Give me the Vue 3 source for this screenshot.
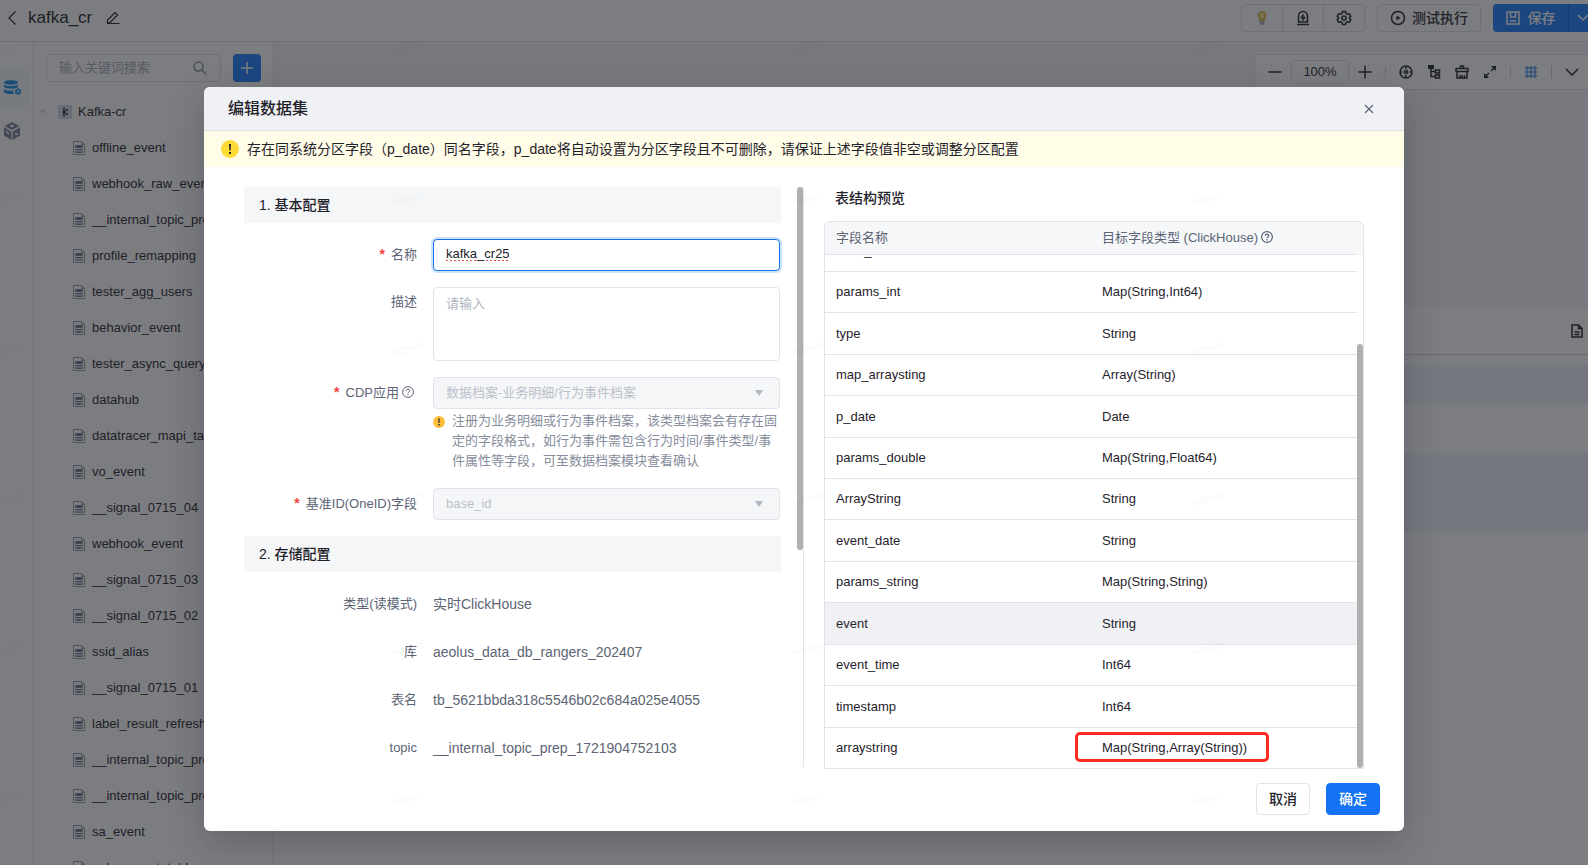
<script setup>
import { ref, onMounted } from 'vue'

const datasets = [
  'offline_event', 'webhook_raw_event', '__internal_topic_prep', 'profile_remapping', 'tester_agg_users',
  'behavior_event', 'tester_async_query', 'datahub', 'datatracer_mapi_table', 'vo_event', '__signal_0715_04',
  'webhook_event', '__signal_0715_03', '__signal_0715_02', 'ssid_alias', '__signal_0715_01',
  'label_result_refresh', '__internal_topic_prep', '__internal_topic_prep', 'sa_event', '__bu_event_table',
]

const fields = [
  ['base_id', 'Int64'],
  ['params_int', 'Map(String,Int64)'],
  ['type', 'String'],
  ['map_arraysting', 'Array(String)'],
  ['p_date', 'Date'],
  ['params_double', 'Map(String,Float64)'],
  ['ArrayString', 'String'],
  ['event_date', 'String'],
  ['params_string', 'Map(String,String)'],
  ['event', 'String'],
  ['event_time', 'Int64'],
  ['timestamp', 'Int64'],
  ['arraystring', 'Map(String,Array(String))'],
]

const storage = [
  ['类型(读模式)', '实时ClickHouse'],
  ['库', 'aeolus_data_db_rangers_202407'],
  ['表名', 'tb_5621bbda318c5546b02c684a025e4055'],
  ['topic', '__internal_topic_prep_1721904752103'],
]

const name = ref('kafka_cr25')
const desc = ref('')
const scroller = ref(null)

onMounted(() => {
  scroller.value.scrollTop = scroller.value.scrollHeight
})
</script>

<template>
  <div class="app">
    <header class="topbar">
      <button class="plain" aria-label="返回">
        <svg width="10" height="16" viewBox="0 0 10 16"><path d="M8.5 1.5 2 8l6.500 6.500" /></svg>
      </button>
      <h1>kafka_cr</h1>
      <button class="plain" aria-label="重命名">
        <svg width="14" height="14" viewBox="0 0 14 14"><path d="M1.500 12.300V9L9 1.500l2.500 2.500-7.500 7.500zM1.500 12.500h12" /></svg>
      </button>
      <span class="grow"></span>
      <div class="tool-group">
        <button aria-label="提示">
          <svg class="bulb" width="12" height="16" viewBox="0 0 12 16">
            <path class="glow" d="M6 1a4.500 4.500 0 0 0-3 7.800V11h6V8.800A4.500 4.500 0 0 0 6 1z" />
            <path class="shine" d="M4 3h4v5H4z" />
            <path class="cap" d="M3.500 11h5v2.500l-1 1.500h-3l-1-1.500z" />
          </svg>
        </button>
        <button aria-label="告警">
          <svg width="14" height="16" viewBox="0 0 14 16"><path d="M1 14.500h12M2.500 12V6a4.500 4.500 0 0 1 9 0v6zM7.500 4.500l-2 3h3l-2 3" /></svg>
        </button>
        <button aria-label="设置">
          <svg width="16" height="16" viewBox="0 0 16 16"><path d="M6.500 1.500h3l.5 2 1.500.8 2-.5 1.300 2.500L13.300 8l1.500 1.700-1.300 2.500-2-.5-1.500.8-.5 2h-3l-.5-2-1.500-.8-2 .5-1.300-2.500L2.700 8 1.200 6.300l1.300-2.500 2 .5L6 3.500z" /><circle cx="8" cy="8" r="2" /></svg>
        </button>
      </div>
      <button class="run">
        <svg width="16" height="16" viewBox="0 0 16 16"><circle cx="8" cy="8" r="6.500" /><path class="solid" d="m6.500 5.500 4 2.500-4 2.500z" /></svg>
        测试执行
      </button>
      <div class="save">
        <button class="save-main">
          <svg width="14" height="14" viewBox="0 0 14 14"><path d="M1 1h12v12H1zM4.500 1v5h5V1M4 10h6" /></svg>
          保存
        </button>
        <button class="save-more" aria-label="更多">
          <svg width="12" height="8" viewBox="0 0 12 8"><path d="m1 1 5 5 5-5" /></svg>
        </button>
      </div>
    </header>

    <div class="workspace">
      <nav class="rail">
        <a href="#data" class="rail-item active" aria-label="数据">
          <svg width="18" height="18" viewBox="0 0 18 18">
            <path class="solid" d="M0 3.500C0 .5 14 .5 14 3.500S0 6.500 0 3.500zM0 5.500c2 2 12 2 14 0V8c-2 2.300-12 2.300-14 0zM0 10c2 1.800 7 2 10 1.300l-1 1.500 1 2C6 15.300 1 15 0 13z" />
            <circle cx="14" cy="12.500" r="1.800" /><path d="M14 9v1.500M14 14.500V16M11 10.800l1.500.8M15.500 13.400l1.500.9M11 14.300l1.500-.9M15.500 11.600l1.500-.8" />
          </svg>
        </a>
        <a href="#model" class="rail-item" aria-label="模型">
          <svg width="16" height="18" viewBox="0 0 16 18">
            <path class="solid" d="M8 0 15.300 4 8 8 .7 4zM0 5.200l7.400 4.200V18L0 13.500zM16 5.200 8.600 9.400V18l7.400-4.500z" />
            <path class="mark" d="m6.500 3 3 2m0-2-3 2M2 9l3 3M11 12h3" />
          </svg>
        </a>
      </nav>

      <aside class="sidebar">
        <div class="search-row">
          <label class="search">
            <input type="text" placeholder="输入关键词搜索" aria-label="输入关键词搜索" />
            <svg width="14" height="14" viewBox="0 0 14 14"><circle cx="5.500" cy="5.500" r="4.500" /><path d="m9 9 4.500 4.500" /></svg>
          </label>
          <button class="add" aria-label="新建"><svg width="14" height="14" viewBox="0 0 14 14"><path d="M7 1v12M1 7h12" /></svg></button>
        </div>
        <div class="source">
          <svg class="caret" width="6" height="4" viewBox="0 0 6 4"><path d="M0 0h6L3 4z" /></svg>
          <svg width="14" height="14" viewBox="0 0 14 14">
            <rect class="tile" width="14" height="14" rx="1" />
            <path d="M6 3v8M6 7l3-2M6 7l3 2" /><circle class="dot" cx="6" cy="7" r="1.500" /><circle class="dot" cx="9" cy="5" r="1" /><circle class="dot" cx="9" cy="9" r="1" /><circle class="dot" cx="6" cy="3.500" r="1" /><circle class="dot" cx="6" cy="10.500" r="1" />
          </svg>
          <span>Kafka-cr</span>
        </div>
        <ul>
          <li v-for="(d, i) in datasets" :key="i">
            <svg width="12" height="14" viewBox="0 0 12 14">
              <path class="sheet" d="M.5.5h8l3 3v10H.5zM8.500.5v3h3" />
              <path class="disk" d="M2 5c0-1.300 8-1.300 8 0v1c0 1.300-8 1.300-8 0zM2 7.600c1.500.8 6.500.8 8 0v1.200c-1.500.9-6.500.9-8 0zM2 10c1.500.8 6.500.8 8 0v1.200c-1.500.9-6.500.9-8 0z" />
            </svg>
            <span>{{ d }}</span>
          </li>
        </ul>
      </aside>

      <main class="canvas">
        <div class="canvas-tools">
          <button class="plain" aria-label="缩小"><svg width="14" height="14" viewBox="0 0 14 14"><path d="M.5 7h13" /></svg></button>
          <span class="zoom">100%</span>
          <button class="plain" aria-label="放大"><svg width="14" height="14" viewBox="0 0 14 14"><path d="M.5 7h13M7 .5v13" /></svg></button>
          <i></i>
          <button class="plain" aria-label="定位"><svg width="14" height="14" viewBox="0 0 14 14"><circle cx="7" cy="7" r="6" /><circle cx="7" cy="7" r="1.500" /><path d="M7 2v2M7 10v2M2 7h1.500M10.500 7H12" /></svg></button>
          <button class="plain" aria-label="布局"><svg width="14" height="14" viewBox="0 0 14 14"><path class="solid" d="M1 0h6v4H1z" /><path d="M4 3v8.500h5M4 6.500h5M8.500 5h4v3h-4zM8.500 10h4v3h-4z" /></svg></button>
          <button class="plain" aria-label="清理"><svg width="14" height="14" viewBox="0 0 14 14"><path d="M5.500 3.500V1h3v2.500M1 3.500h12v3H1zM2 6.500V13h10V6.500M5 13v-3M7 13v-3M9.500 13v-3" /></svg></button>
          <button class="plain" aria-label="全屏"><svg width="14" height="14" viewBox="0 0 14 14"><path d="M8 6 11 3M6 8l-3 3" /><path class="solid" d="M8 1h5v5zM1 8v5h5z" /></svg></button>
          <i></i>
          <button class="plain grid-on" aria-label="网格"><svg width="14" height="14" viewBox="0 0 14 14"><path d="M3 1v12M7 1v12M11 1v12M1 3h12M1 7h12M1 11h12" /></svg></button>
          <i></i>
          <button class="plain" aria-label="展开"><svg width="14" height="8" viewBox="0 0 14 8"><path d="m1 1 6 6 6-6" /></svg></button>
        </div>
        <section class="detail">
          <div class="detail-head">
            <svg width="12" height="14" viewBox="0 0 12 14"><path d="M1 1h6.500L11 4.500V13H1zM7.500 1v3.500H11M3.500 8h5M3.500 10.500h5" /></svg>
          </div>
          <div class="band short"></div>
          <div class="band tall"></div>
        </section>
      </main>
    </div>

    <div class="mask">
      <section class="modal" role="dialog" aria-labelledby="modal-title">
        <header class="modal-head">
          <h2 id="modal-title">编辑数据集</h2>
          <button class="plain" aria-label="关闭"><svg width="10" height="10" viewBox="0 0 10 10"><path d="m1 1 8 8M9 1 1 9" /></svg></button>
        </header>
        <p class="alert">
          <svg width="18" height="18" viewBox="0 0 18 18"><circle cx="9" cy="9" r="9" /><path d="M8 4h2l-.4 6.500H8.400zM8 12h2v2H8z" /></svg>
          存在同系统分区字段（p_date）同名字段，p_date将自动设置为分区字段且不可删除，请保证上述字段值非空或调整分区配置
        </p>
        <div class="modal-body">
          <form class="config">
            <h3>1. 基本配置</h3>
            <div class="row">
              <label for="ds-name"><b>*</b>名称</label>
              <input id="ds-name" v-model="name" class="field focused" type="text" />
            </div>
            <div class="row">
              <label for="ds-desc">描述</label>
              <textarea id="ds-desc" v-model="desc" class="field" placeholder="请输入"></textarea>
            </div>
            <div class="row">
              <label for="ds-app" class="with-help"><b>*</b>CDP应用<svg class="help" width="12" height="12" viewBox="0 0 12 12"><circle cx="6" cy="6" r="5.400" /><path d="M4.300 4.800c0-2.300 3.400-2.200 3.400-.1C7.700 5.900 6 6 6 7.300M6 8.300v1.200" /></svg></label>
              <div>
                <div class="select">
                  <select id="ds-app" class="field" disabled><option>数据档案-业务明细/行为事件档案</option></select>
                  <svg width="8" height="6" viewBox="0 0 8 6"><path d="M0 0h8L4 6z" /></svg>
                </div>
                <p class="tip">
                  <svg width="12" height="12" viewBox="0 0 12 12"><circle cx="6" cy="6" r="6" /><path d="M5.300 2.500h1.400L6.500 7h-1zM5.300 8h1.400v1.500H5.300z" /></svg>
                  <span>注册为业务明细或行为事件档案，该类型档案会有存在固定的字段格式，如行为事件需包含行为时间/事件类型/事件属性等字段，可至数据档案模块查看确认</span>
                </p>
              </div>
            </div>
            <div class="row">
              <label for="ds-key"><b>*</b>基准ID(OneID)字段</label>
              <div class="select">
                <select id="ds-key" class="field" disabled><option>base_id</option></select>
                <svg width="8" height="6" viewBox="0 0 8 6"><path d="M0 0h8L4 6z" /></svg>
              </div>
            </div>
            <h3>2. 存储配置</h3>
            <div v-for="s in storage" :key="s[0]" class="row">
              <span class="key">{{ s[0] }}</span>
              <span class="value">{{ s[1] }}</span>
            </div>
            <div class="thumb"></div>
          </form>

          <section class="preview">
            <h3>表结构预览</h3>
            <div class="table-box">
              <div ref="scroller" class="scroller">
                <table>
                  <thead>
                    <tr>
                      <th>字段名称</th>
                      <th>目标字段类型 (ClickHouse)<svg class="help" width="12" height="12" viewBox="0 0 12 12"><circle cx="6" cy="6" r="5.400" /><path d="M4.300 4.800c0-2.300 3.400-2.200 3.400-.1C7.700 5.900 6 6 6 7.300M6 8.300v1.200" /></svg></th>
                    </tr>
                  </thead>
                  <tbody>
                    <tr v-for="f in fields" :key="f[0]" :class="{ hover: f[0] === 'event' }">
                      <td>{{ f[0] }}</td>
                      <td><span :class="{ marked: f[0] === 'arraystring' }">{{ f[1] }}</span></td>
                    </tr>
                  </tbody>
                </table>
              </div>
              <div class="thumb"></div>
            </div>
          </section>
        </div>
        <footer class="modal-foot">
          <button type="button">取消</button>
          <button type="button" class="primary">确定</button>
        </footer>
      </section>
    </div>

    <div class="watermark" aria-hidden="true">
      <span v-for="n in 30" :key="n">admin</span>
    </div>
  </div>
</template>

<style>
body {
  overflow: hidden;
}
</style>

<style scoped>
* {
  box-sizing: border-box;
}

.app {
  position: relative;
  display: flex;
  flex-direction: column;
  min-width: 1608px;
  height: 100vh;
  overflow: hidden;
  background: #fff;
  color: #1f232b;
  font: 13px/20px "Liberation Sans", "Noto Sans CJK SC", sans-serif;
}

h1, h2, h3, p, ul {
  margin: 0;
  padding: 0;
  font-weight: 500;
}

button, input, textarea, select {
  margin: 0;
  padding: 0;
  color: inherit;
  font: inherit;
}

svg {
  flex: none;
  fill: none;
  stroke: currentColor;
  stroke-width: 1.5;
}

.solid {
  fill: currentColor;
  stroke: none;
}

.plain {
  display: flex;
  align-items: center;
  justify-content: center;
  border: 0;
  background: none;
}

.grow {
  flex: 1;
}

.topbar {
  display: flex;
  align-items: center;
  height: 42px;
  padding: 0 12px 6px 7px;
  border-bottom: 1px solid #dfe1e8;
}

.topbar h1 {
  margin: 0 14px 0 11px;
  font-size: 17px;
}

.topbar .plain svg {
  stroke-width: 1.2;
}

.tool-group, .save {
  display: flex;
}

.tool-group button, .run {
  display: flex;
  align-items: center;
  justify-content: center;
  height: 28px;
  border: 1px solid #dfe1e8;
  background: #fff;
}

.tool-group button {
  width: 42px;
}

.tool-group button + button {
  margin-left: -1px;
}

.tool-group button:first-child {
  border-radius: 4px 0 0 4px;
}

.tool-group button:last-child {
  border-radius: 0 4px 4px 0;
}

.bulb {
  stroke: none;
}

.glow {
  fill: #d9b84a;
}

.shine {
  fill: #fbe58a;
}

.cap {
  fill: #aab0bb;
}

.run {
  gap: 6px;
  width: 104px;
  margin: 0 12px;
  border-radius: 4px;
  font-size: 14px;
  font-weight: 500;
}

.save button {
  display: flex;
  align-items: center;
  justify-content: center;
  height: 28px;
  border: 0;
  background: #1a7cff;
  color: #fff;
  font-size: 14px;
  font-weight: 500;
}

.save-main {
  gap: 8px;
  width: 75px;
  border-radius: 4px 0 0 4px;
}

.save .save-more {
  width: 28px;
  border-left: 1px solid #0e5fcc;
  border-radius: 0 4px 4px 0;
}

.workspace {
  display: flex;
  flex: 1;
  min-height: 0;
}

.rail {
  display: flex;
  flex-direction: column;
  gap: 7px;
  width: 34px;
  padding-top: 28px;
  border-right: 1px solid #dfe1e8;
}

.rail-item {
  display: flex;
  align-items: center;
  width: 30px;
  height: 36px;
  padding-left: 4px;
  color: #7b8196;
}

.rail-item.active {
  border-radius: 0 4px 4px 0;
  background: #f3f7fc;
  color: #1a90e8;
}

.mark {
  stroke: #fff;
}

.sidebar {
  width: 240px;
  padding: 12px 12px 0;
  overflow: hidden;
  border-right: 1px solid #dfe1e8;
}

.search-row {
  display: flex;
  gap: 12px;
}

.search {
  display: flex;
  flex: 1;
  align-items: center;
  min-width: 0;
  height: 28px;
  padding: 0 13px 0 12px;
  border: 1px solid #dfe1e8;
  border-radius: 4px;
  color: #8b91a0;
}

.search input {
  flex: 1;
  min-width: 0;
  border: 0;
  outline: 0;
  background: none;
}

.search input::placeholder {
  color: #a8adba;
}

.add {
  display: flex;
  align-items: center;
  justify-content: center;
  width: 28px;
  height: 28px;
  border: 0;
  border-radius: 4px;
  background: #1a7cff;
  color: #fff;
}

.source, .sidebar li {
  display: flex;
  align-items: center;
  height: 36px;
  white-space: nowrap;
}

.source {
  margin-top: 12px;
}

.source svg {
  margin-right: 6px;
  stroke-width: 1;
}

.source .caret {
  margin-right: 12px;
  margin-left: -6px;
  fill: #d5d8df;
  stroke: none;
}

.tile {
  fill: #d4d6e4;
  stroke: none;
}

.dot {
  fill: currentColor;
  stroke: none;
}

.sidebar ul {
  list-style: none;
}

.sidebar li {
  gap: 7px;
  padding-left: 27px;
}

.sheet {
  stroke: #989da8;
  stroke-width: 1;
}

.disk {
  fill: #62768c;
  stroke: none;
}

.canvas {
  display: flex;
  flex: 1;
  flex-direction: column;
  min-width: 0;
  padding-top: 12px;
  background: #f5f6f9;
}

.canvas-tools {
  display: flex;
  align-items: center;
  align-self: flex-end;
  gap: 14px;
  height: 36px;
  margin-right: 15px;
  padding: 0 13px;
  border: 1px solid #dfe1e8;
  border-radius: 4px;
  background: #fff;
}

.canvas-tools .plain:first-child, .zoom {
  margin-right: -5px;
}

.zoom {
  width: 58px;
  height: 24px;
  border: 1px solid #dfe1e8;
  border-radius: 4px;
  line-height: 22px;
  text-align: center;
}

.canvas-tools i {
  width: 1px;
  height: 12px;
  margin: 0 -1px;
  background: #d0d3db;
}

.grid-on {
  color: #5c9bf0;
}

.detail {
  flex: 1;
  margin-top: 217px;
  background: #fff;
}

.detail-head {
  display: flex;
  align-items: center;
  justify-content: flex-end;
  height: 48px;
  padding: 0 25px 0 0;
  border-bottom: 1px solid #d0d3db;
}

.band {
  background: #eff4f9;
}

.short {
  height: 40px;
  margin-top: 10px;
}

.tall {
  height: 80px;
  margin-top: 48px;
}

.mask {
  position: absolute;
  inset: 0;
  display: flex;
  align-items: flex-start;
  justify-content: center;
  padding-top: 87px;
  background: rgba(30, 31, 36, 0.58);
}

.modal {
  width: 1200px;
  overflow: hidden;
  border-radius: 6px;
  background: #fff;
  box-shadow: 0 12px 36px rgba(20, 24, 40, 0.24);
}

.modal-head {
  display: flex;
  align-items: center;
  justify-content: space-between;
  height: 44px;
  padding: 0 30px 0 24px;
  border-bottom: 1px solid #e0e3ea;
  background: #f0f1f5;
}

.modal-head h2 {
  font-size: 16px;
}

.modal-head svg {
  color: #5c6475;
  stroke-width: 1.2;
}

.alert {
  display: flex;
  align-items: center;
  gap: 8px;
  height: 36px;
  padding: 0 0 1px 17px;
  background: #fffce8;
  font-size: 14px;
  font-weight: 400;
}

.alert svg {
  fill: #ffd936;
  stroke: none;
}

.alert path, .tip path {
  fill: #1d2129;
}

.modal-body {
  display: grid;
  grid-template-columns: 560px 1fr;
  gap: 20px;
  align-items: start;
  padding: 20px 40px 0;
}

.config {
  position: relative;
  display: flex;
  flex-direction: column;
  gap: 16px;
  height: 580px;
  padding-right: 22px;
  overflow: hidden;
  border-right: 1px solid #e0e3ea;
}

.config h3 {
  height: 36px;
  padding-left: 15px;
  background: #f5f6f8;
  font-size: 14px;
  line-height: 36px;
}

.row {
  display: grid;
  grid-template-columns: 173px 1fr;
  gap: 16px;
  padding-right: 1px;
  color: #5c6475;
}

.row label {
  justify-self: end;
  line-height: 30px;
}

.row .with-help {
  margin-right: 3px;
}

.row b {
  margin-right: 6px;
  color: #f53f3f;
  font-size: 14px;
}

.help {
  margin-left: 3px;
  vertical-align: -1px;
  stroke-width: 1;
}

.key {
  justify-self: end;
  line-height: 32px;
}

.value {
  font-size: 14px;
  line-height: 32px;
}

.field {
  display: block;
  width: 100%;
  height: 32px;
  padding: 0 12px;
  border: 1px solid #e0e3ea;
  border-radius: 4px;
  outline: 0;
  background: #fff;
  color: #1d2129;
  appearance: none;
}

.field::placeholder {
  color: #b0b5c2;
}

.focused {
  padding-bottom: 3px;
  border-color: #1473f2;
  box-shadow: 0 0 0 2px #cfe2fd;
  text-decoration: underline dotted #f5504f 2px;
  text-underline-offset: 2px;
}

textarea.field {
  height: 74px;
  padding: 6px 12px;
  resize: none;
}

.select {
  position: relative;
}

.select .field {
  background: #f5f6f8;
  color: #bbc0cb;
  opacity: 1;
}

.select svg {
  position: absolute;
  top: 13px;
  right: 17px;
  fill: #b2b8c5;
  stroke: none;
}

.tip {
  display: flex;
  gap: 7px;
  margin: 2px 0 1px;
  color: #868d9c;
  font-weight: 400;
}

.tip svg {
  margin-top: 5px;
  fill: #ffbf3a;
  stroke: none;
}

.thumb {
  position: absolute;
  right: 0;
  width: 6px;
  border-radius: 3px;
  background: #b0b0b0;
}

.config .thumb {
  top: 0;
  height: 363px;
}

.preview h3 {
  padding-left: 11px;
  font-size: 14px;
  line-height: 22px;
}

.table-box {
  position: relative;
  height: 548px;
  margin-top: 12px;
  padding-right: 6px;
  overflow: hidden;
  border: 1px solid #e0e3ea;
  border-radius: 6px 6px 0 0;
  background: linear-gradient(#f5f7f9 33px, #fff 33px);
}

.table-box .thumb {
  bottom: 0;
  height: 424px;
}

.scroller {
  height: 100%;
  overflow-y: auto;
  scrollbar-width: none;
}

table {
  width: 100%;
  border-spacing: 0;
  table-layout: fixed;
}

th, td {
  padding: 0 11px;
  border-bottom: 1px solid #e0e3ea;
  text-align: left;
}

th {
  position: sticky;
  top: 0;
  z-index: 1;
  height: 33px;
  background: #f5f7f9;
  color: #5c6475;
  font-weight: 400;
}

th .help {
  stroke-width: 1.2;
}

td {
  height: 41px;
}

tr:nth-child(5n + 3) td, tr:nth-child(5n) td, tr:nth-child(12) td {
  height: 42px;
}

tbody tr:last-child td {
  height: 40px;
  border-bottom: 0;
}

.hover td {
  background: #f0f1f5;
}

.marked {
  position: relative;
}

.marked::after {
  position: absolute;
  inset: -8px -22px -7px -27px;
  border: 3px solid #fa2c22;
  border-radius: 5px;
  content: "";
}

.modal-foot {
  display: flex;
  justify-content: flex-end;
  gap: 16px;
  padding: 14px 24px 16px;
}

.modal-foot button {
  width: 54px;
  height: 32px;
  border: 1px solid #e0e3ea;
  border-radius: 4px;
  background: #fff;
  font-size: 14px;
  font-weight: 500;
}

.modal-foot .primary {
  border-color: #1473f2;
  background: #1473f2;
  color: #fff;
}

.watermark {
  position: absolute;
  inset: -26px 0 0 -193px;
  display: grid;
  grid-template-columns: repeat(5, 400px);
  grid-auto-rows: 150px;
  place-items: center;
  color: rgba(0, 0, 0, 0.05);
  font-size: 12px;
  pointer-events: none;
}

.watermark span {
  transform: rotate(-15deg);
}
</style>
